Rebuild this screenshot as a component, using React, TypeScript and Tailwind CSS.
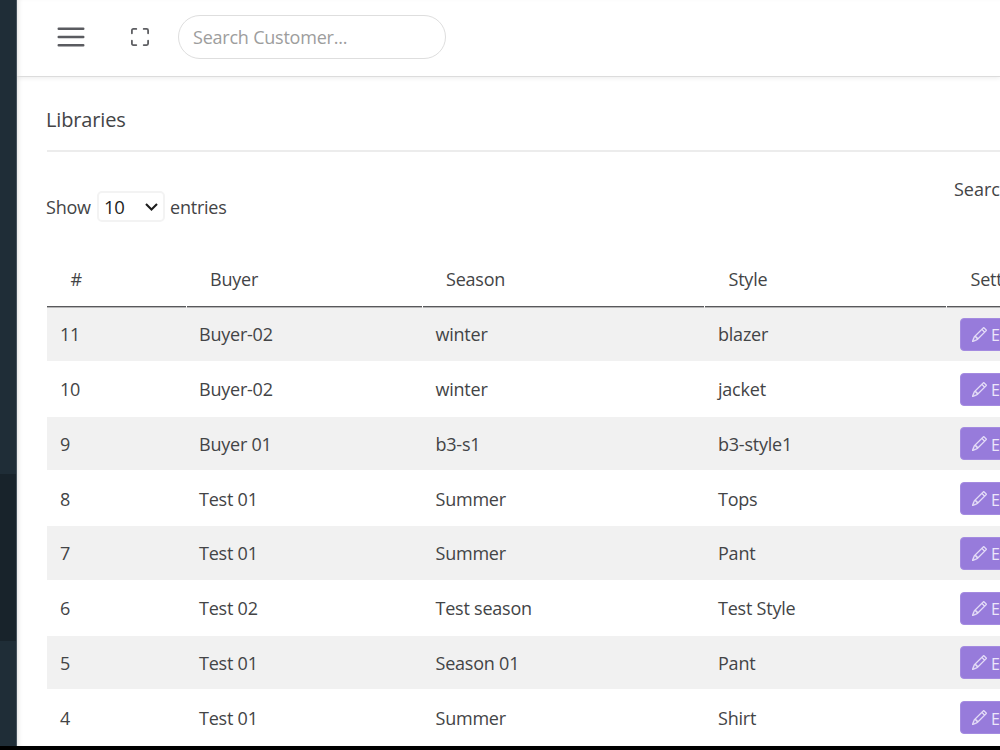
import { BsPencil } from "react-icons/bs";

const columns = ["#", "Buyer", "Season", "Style", "Settings"];

const libraries = [
  { id: 11, buyer: "Buyer-02", season: "winter", style: "blazer" },
  { id: 10, buyer: "Buyer-02", season: "winter", style: "jacket" },
  { id: 9, buyer: "Buyer 01", season: "b3-s1", style: "b3-style1" },
  { id: 8, buyer: "Test 01", season: "Summer", style: "Tops" },
  { id: 7, buyer: "Test 01", season: "Summer", style: "Pant" },
  { id: 6, buyer: "Test 02", season: "Test season", style: "Test Style" },
  { id: 5, buyer: "Test 01", season: "Season 01", style: "Pant" },
  { id: 4, buyer: "Test 01", season: "Summer", style: "Shirt" },
];

const gridColumns = "grid grid-cols-[139.5px_236px_282.5px_242px_200px]";

function Sidebar() {
  return (
    <aside className="w-[17px] shrink-0 bg-[#1f2d37] border-r border-[#45525c]">
      <div className="h-[474px]" />
      <div className="h-[167px] bg-[#18232b]" />
    </aside>
  );
}

function Header() {
  return (
    <header className="h-[77px] shrink-0 flex items-center border-b border-[#dcdcdc] shadow-[0_1px_5px_rgba(0,0,0,0.08)] pl-10 pb-[2px]">
      <button className="w-[28px]" aria-label="Toggle menu">
        <svg
          className="h-[20px] w-[28px] text-[#5a5b60]"
          viewBox="0 0 28 20"
          fill="none"
          stroke="currentColor"
          strokeWidth={2.4}
          strokeLinecap="round"
        >
          <path d="M1.7 1.8H26.3M1.7 10H26.3M1.7 18.2H26.3" />
        </svg>
      </button>
      <button className="ml-[46px]" aria-label="Fullscreen">
        <svg
          className="h-[18px] w-[18px] text-[#5d5e62]"
          viewBox="0 0 18 18"
          fill="none"
          stroke="currentColor"
          strokeWidth={1.8}
          strokeLinecap="round"
          strokeLinejoin="round"
        >
          <path d="M0.9 5.3V2.4Q0.9 0.9 2.4 0.9H5.3M12.7 0.9H15.6Q17.1 0.9 17.1 2.4V5.3M17.1 12.7V15.6Q17.1 17.1 15.6 17.1H12.7M5.3 17.1H2.4Q0.9 17.1 0.9 15.6V12.7" />
        </svg>
      </button>
      <input
        className="ml-[29px] h-[44px] w-[268px] rounded-full border border-[#dedede] px-[14px] text-[18px] tracking-[-0.22px] placeholder:text-[#9d9d9d]"
        placeholder="Search Customer..."
      />
    </header>
  );
}

export default function App() {
  return (
    <div className="h-[750px] w-[1000px] overflow-hidden bg-black font-['Open_Sans','Noto_Sans',sans-serif] text-[18px] text-[#434446]">
      <div className="flex h-[746px] overflow-hidden bg-white">
        <Sidebar />
        <div className="w-[983px] shrink-0 flex flex-col overflow-hidden shadow-[inset_4px_0_5px_-3px_rgba(0,0,0,0.13)]">
          <Header />
          <main className="ml-[30px] w-[1100px] tracking-[-0.22px]">
            <h1 className="h-[75px] border-b-2 border-[#ececec] pt-[28px] -indent-px text-[20px] leading-[30px] tracking-[-0.15px]">
              Libraries
            </h1>

            <div className="flex h-[102px]">
              <div className="-ml-px mt-[39px] flex h-[31px] w-[181px] items-center">
                <span className="w-[46px] pt-[2px]">Show</span>
                <button className="ml-[5px] flex h-[31px] w-[68px] items-center justify-between rounded-[5px] border-2 border-[#f3f3f3] pl-[5px] pr-[5px] text-[18.5px] text-[#1d1d1d]">
                  <span className="pt-px">10</span>
                  <svg
                    className="h-[8px] w-[13px]"
                    viewBox="0 0 13 8"
                    fill="none"
                    stroke="currentColor"
                    strokeWidth={2.1}
                  >
                    <path d="M1 1L6.5 6.5L12 1" />
                  </svg>
                </button>
                <span className="ml-[5px] pt-[2px]">entries</span>
              </div>
              <span className="ml-[727px] mt-[24px] leading-[27px] tracking-normal">Search:</span>
            </div>

            <div className={gridColumns}>
              {columns.map((column) => (
                <div
                  key={column}
                  className="mr-px h-[53px] border-b border-[#58595b] pl-[23.5px] pt-[12px] leading-[27px] shadow-[0_1px_0_#b5b5b6]"
                >
                  {column}
                </div>
              ))}
            </div>

            {libraries.map((library) => (
              <div
                key={library.id}
                className={`${gridColumns} h-[54.75px] items-center border-b border-white pt-[2px] odd:bg-white even:bg-[#f1f1f1]`}
              >
                <span className="pl-[13px]">{library.id}</span>
                <span className="pl-[12.5px]">{library.buyer}</span>
                <span className="pl-[13px]">{library.season}</span>
                <span className="pl-[13px]">{library.style}</span>
                <button className="-mt-px ml-[13px] flex h-[33px] w-[80px] items-center rounded-[4px] border border-[#a48be0] bg-[#977bdb] pl-[11px] text-[16px] text-[#ece6fa]">
                  <BsPencil className="mr-[4px] h-[15px] w-[15px]" strokeWidth={0.4} />
                  <span className="pt-[2px]">Edit</span>
                </button>
              </div>
            ))}
          </main>
        </div>
      </div>
    </div>
  );
}
